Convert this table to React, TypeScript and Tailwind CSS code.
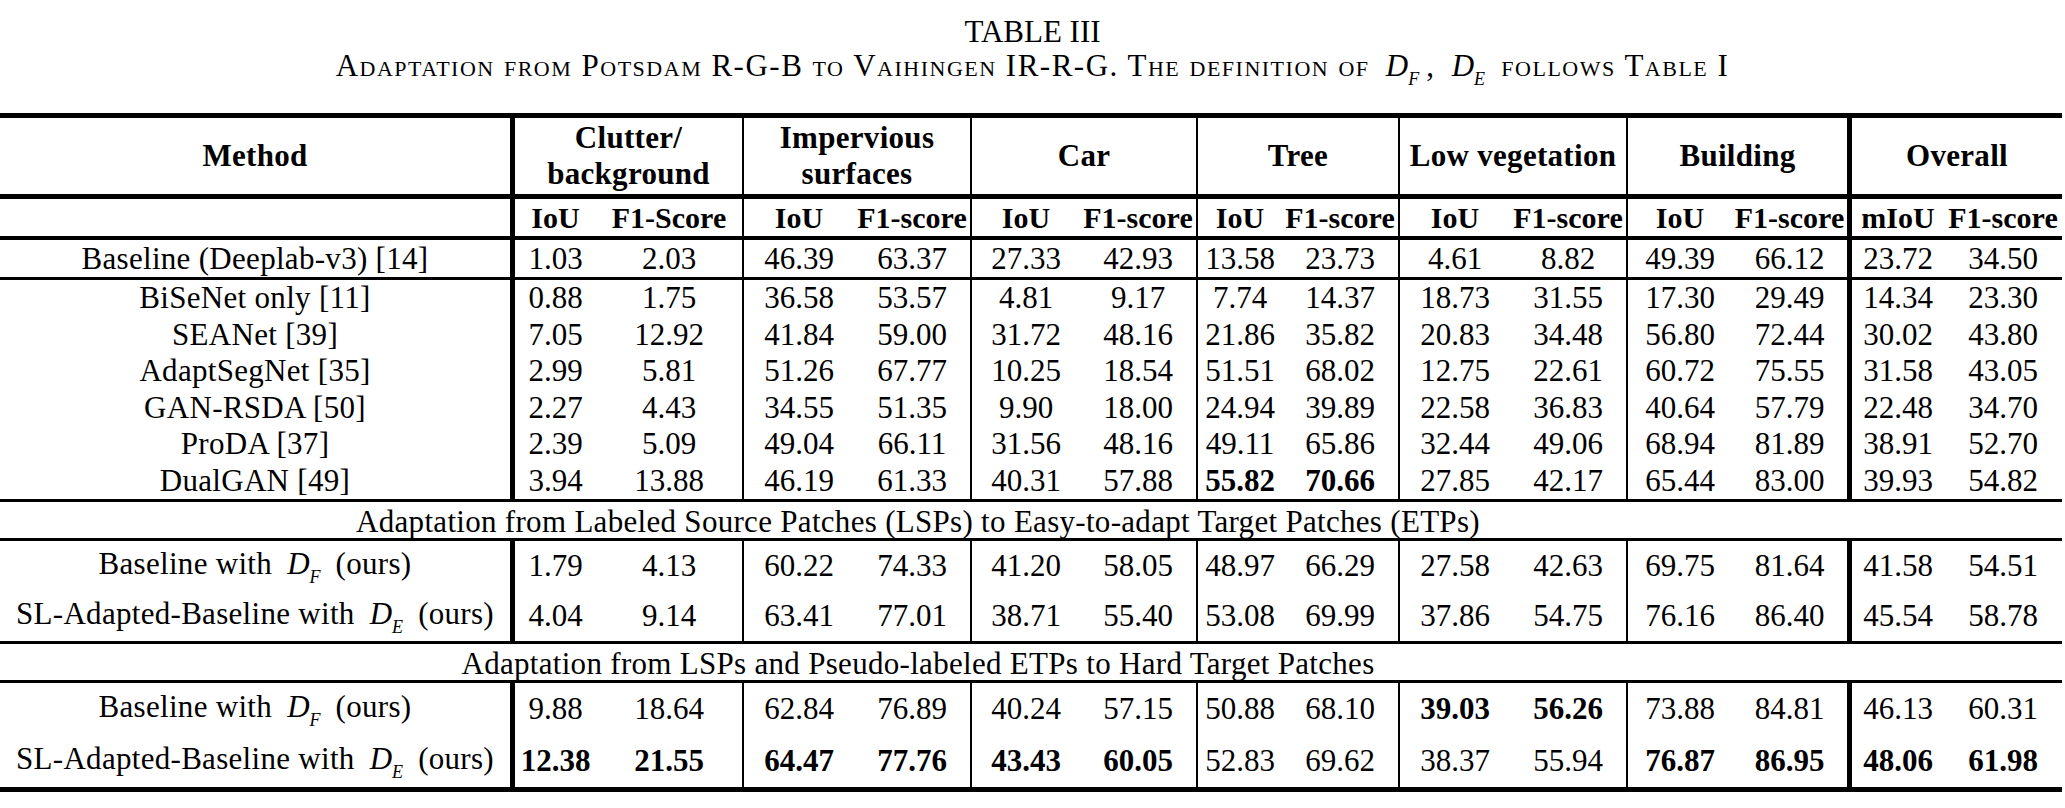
import React from "react";

type Cell = string | { v: string; b: boolean };

const groups = [
  { box: "w-[229px] border-r-2 border-black", a: "w-[81px]" },
  { box: "w-[228px] border-r-2 border-black", a: "w-[110px]" },
  { box: "w-[226px] border-r-2 border-black", a: "w-[108px]" },
  { box: "w-[202px] border-r-2 border-black", a: "w-[84px]" },
  { box: "w-[228px] border-r-2 border-black", a: "w-[110px]" },
  { box: "w-[224px] border-r-[5px] border-black", a: "w-[104px]" },
  { box: "w-[210px]", a: "w-[92px]" },
];

const B = (v: string): Cell => ({ v, b: true });

function Sub({ d, s }: { d: string; s: string }) {
  return (
    <span className="italic [font-variant-caps:normal] tracking-normal mx-[7px] whitespace-nowrap">
      {d}
      <span className="relative top-[9px] text-[18px]">{s}</span>
    </span>
  );
}

function V({ c }: { c: Cell }) {
  if (typeof c === "string") return <span>{c}</span>;
  return <span className="font-bold">{c.v}</span>;
}

function Row({
  method,
  cells,
  cls,
}: {
  method: React.ReactNode;
  cells: Cell[];
  cls: string;
}) {
  return (
    <div className={`flex ${cls}`}>
      <div className="w-[515px] border-r-[5px] border-black flex items-center justify-center whitespace-nowrap tracking-[0.3px]">
        {method}
      </div>
      {groups.map((g, i) => (
        <div key={i} className={`flex ${g.box}`}>
          <div className={`${g.a} flex items-center justify-center`}>
            <V c={cells[i * 2]} />
          </div>
          <div className="flex-1 flex items-center justify-center">
            <V c={cells[i * 2 + 1]} />
          </div>
        </div>
      ))}
    </div>
  );
}

const block1: { m: string; c: Cell[] }[] = [
  { m: "BiSeNet only [11]", c: ["0.88", "1.75", "36.58", "53.57", "4.81", "9.17", "7.74", "14.37", "18.73", "31.55", "17.30", "29.49", "14.34", "23.30"] },
  { m: "SEANet [39]", c: ["7.05", "12.92", "41.84", "59.00", "31.72", "48.16", "21.86", "35.82", "20.83", "34.48", "56.80", "72.44", "30.02", "43.80"] },
  { m: "AdaptSegNet [35]", c: ["2.99", "5.81", "51.26", "67.77", "10.25", "18.54", "51.51", "68.02", "12.75", "22.61", "60.72", "75.55", "31.58", "43.05"] },
  { m: "GAN-RSDA [50]", c: ["2.27", "4.43", "34.55", "51.35", "9.90", "18.00", "24.94", "39.89", "22.58", "36.83", "40.64", "57.79", "22.48", "34.70"] },
  { m: "ProDA [37]", c: ["2.39", "5.09", "49.04", "66.11", "31.56", "48.16", "49.11", "65.86", "32.44", "49.06", "68.94", "81.89", "38.91", "52.70"] },
  { m: "DualGAN [49]", c: ["3.94", "13.88", "46.19", "61.33", "40.31", "57.88", B("55.82"), B("70.66"), "27.85", "42.17", "65.44", "83.00", "39.93", "54.82"] },
];

const baseF = (
  <span>
    Baseline with <Sub d="D" s="F" /> (ours)
  </span>
);
const slE = (
  <span>
    SL-Adapted-Baseline with <Sub d="D" s="E" /> (ours)
  </span>
);

export default function App() {
  return (
    <div className="w-[2065px] h-[808px] bg-white text-black font-['Liberation_Serif',serif] overflow-hidden">
      <div className="pt-[15px]">
        <div className="text-[31px] leading-[34px] h-[34px] text-center">TABLE III</div>
        <div className="text-[31px] leading-[34px] h-[34px] text-center tracking-[1.5px] [font-variant-caps:small-caps]">
          Adaptation from Potsdam R-G-B to Vaihingen IR-R-G. The definition of <Sub d="D" s="F" />,{" "}
          <Sub d="D" s="E" /> follows Table I
        </div>
      </div>
      <div className="mt-[30px] w-[2062px] border-t-[5px] border-black text-[31px] leading-[36px]">
        {/* header row 1 */}
        <div className="flex h-[81px] border-b-[5px] border-black font-bold text-[31px] tracking-[0.3px]">
          <div className="w-[515px] border-r-[5px] border-black flex items-center justify-center">Method</div>
          <div className="w-[229px] border-r-2 border-black flex items-center justify-center text-center leading-[36px]">
            Clutter/
            <br />
            background
          </div>
          <div className="w-[228px] border-r-2 border-black flex items-center justify-center text-center leading-[36px]">
            Impervious
            <br />
            surfaces
          </div>
          <div className="w-[226px] border-r-2 border-black flex items-center justify-center">Car</div>
          <div className="w-[202px] border-r-2 border-black flex items-center justify-center">Tree</div>
          <div className="w-[228px] border-r-2 border-black flex items-center justify-center whitespace-nowrap">Low vegetation</div>
          <div className="w-[224px] border-r-[5px] border-black flex items-center justify-center">Building</div>
          <div className="w-[210px] flex items-center justify-center">Overall</div>
        </div>
        {/* header row 2 */}
        <Row
          cls="h-[41px] border-b-4 border-black font-bold text-[30px]"
          method=""
          cells={[B("IoU"), B("F1-Score"), B("IoU"), B("F1-score"), B("IoU"), B("F1-score"), B("IoU"), B("F1-score"), B("IoU"), B("F1-score"), B("IoU"), B("F1-score"), B("mIoU"), B("F1-score")]}
        />
        <Row
          cls="h-[40px] border-b-[3px] border-black"
          method="Baseline (Deeplab-v3) [14]"
          cells={["1.03", "2.03", "46.39", "63.37", "27.33", "42.93", "13.58", "23.73", "4.61", "8.82", "49.39", "66.12", "23.72", "34.50"]}
        />
        <div className="flex flex-col h-[222px] border-b-[3px] border-black">
          {block1.map((r) => (
            <Row key={r.m} cls="flex-1" method={r.m} cells={r.c} />
          ))}
        </div>
        <div className="h-[39px] pt-[3px] border-b-[3px] border-black flex items-center">
          <div className="w-[1836px] text-center whitespace-nowrap tracking-[0.3px]">
            Adaptation from Labeled Source Patches (LSPs) to Easy-to-adapt Target Patches (ETPs)
          </div>
        </div>
        <div className="flex flex-col h-[103px] border-b-[3px] border-black">
          <Row
            cls="flex-1"
            method={baseF}
            cells={["1.79", "4.13", "60.22", "74.33", "41.20", "58.05", "48.97", "66.29", "27.58", "42.63", "69.75", "81.64", "41.58", "54.51"]}
          />
          <Row
            cls="flex-1"
            method={slE}
            cells={["4.04", "9.14", "63.41", "77.01", "38.71", "55.40", "53.08", "69.99", "37.86", "54.75", "76.16", "86.40", "45.54", "58.78"]}
          />
        </div>
        <div className="h-[39px] pt-[3px] border-b-[3px] border-black flex items-center">
          <div className="w-[1836px] text-center whitespace-nowrap tracking-[0.3px]">
            Adaptation from LSPs and Pseudo-labeled ETPs to Hard Target Patches
          </div>
        </div>
        <div className="flex flex-col h-[109px] border-b-[5px] border-black">
          <Row
            cls="flex-1"
            method={baseF}
            cells={["9.88", "18.64", "62.84", "76.89", "40.24", "57.15", "50.88", "68.10", B("39.03"), B("56.26"), "73.88", "84.81", "46.13", "60.31"]}
          />
          <Row
            cls="flex-1"
            method={slE}
            cells={[B("12.38"), B("21.55"), B("64.47"), B("77.76"), B("43.43"), B("60.05"), "52.83", "69.62", "38.37", "55.94", B("76.87"), B("86.95"), B("48.06"), B("61.98")]}
          />
        </div>
      </div>
    </div>
  );
}
